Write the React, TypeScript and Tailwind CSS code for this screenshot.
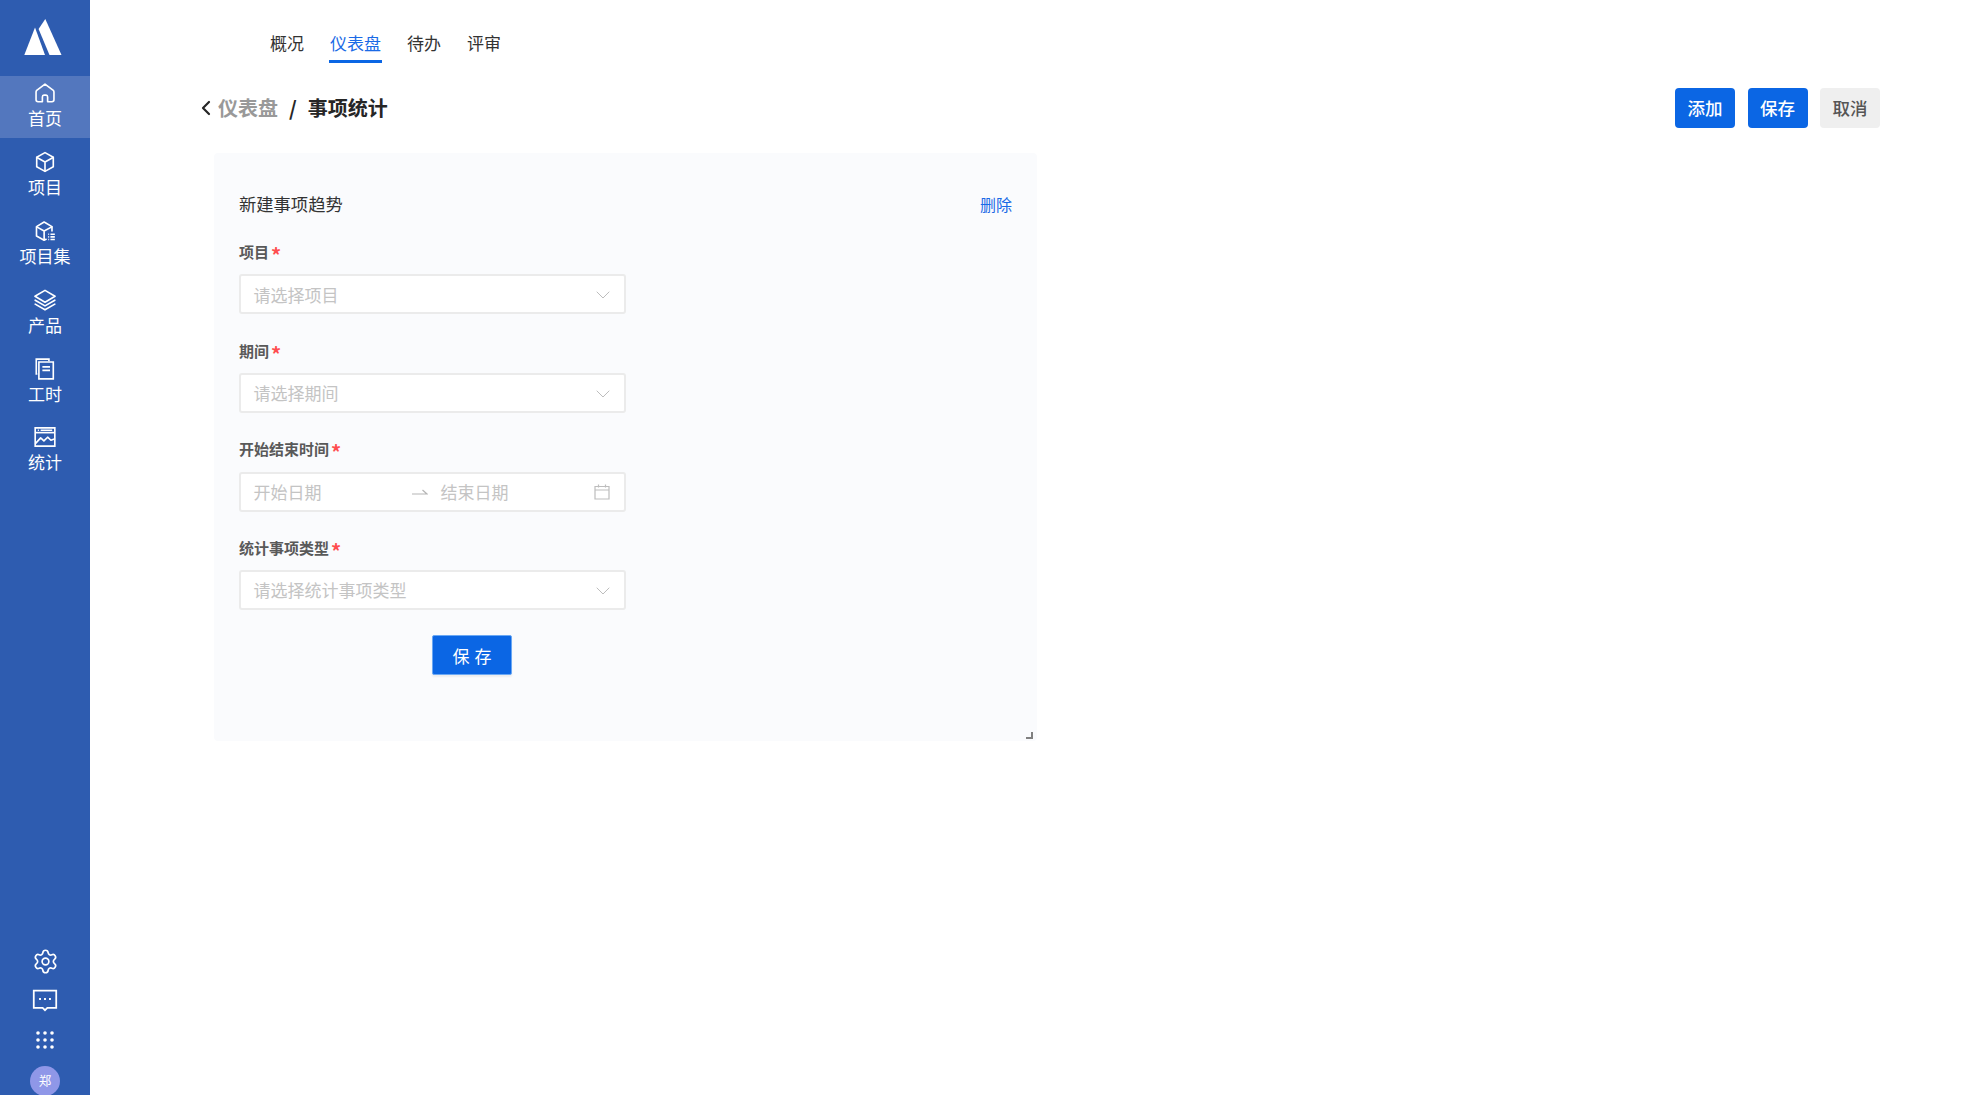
import { ChevronDown, ChevronLeft, Settings } from 'lucide-react';
import type { ReactNode } from 'react';

function Icon({ children, className = 'w-[24px] h-[24px]' }: { children: ReactNode; className?: string }) {
  return (
    <svg viewBox="0 0 22 22" fill="none" stroke="currentColor" strokeWidth="1.5" strokeLinejoin="round" strokeLinecap="round" className={className}>
      {children}
    </svg>
  );
}

const navItems: { label: string; icon: ReactNode; active?: boolean }[] = [
  {
    label: '首页',
    active: true,
    icon: (
      <Icon>
        <path d="M11 2.8 L3.4 8.6 C3 9 2.8 9.4 2.8 10 V17.2 C2.8 18.3 3.6 19 4.6 19 H8.6 V14.6 C8.6 13.6 9.3 13 10 13 H12 C12.8 13 13.4 13.6 13.4 14.6 V19 H17.4 C18.4 19 19.2 18.3 19.2 17.2 V10 C19.2 9.4 19 9 18.6 8.6 Z" />
      </Icon>
    ),
  },
  {
    label: '项目',
    icon: (
      <Icon>
        <path d="M11 2.4 L18.6 6.6 V15.4 L11 19.6 L3.4 15.4 V6.6 Z" />
        <path d="M3.6 6.8 L11 11 L18.4 6.8 M11 11 V19.4" />
      </Icon>
    ),
  },
  {
    label: '项目集',
    icon: (
      <Icon>
        <path d="M12 18.6 L10.2 19.4 L3.2 15.6 V7 L10.2 2.8 L17.4 7 V11" />
        <path d="M3.4 7.2 L10.2 11 L17.2 7.2 M10.2 11 V19" />
        <path d="M14 14 H14.8 M16 14 H20 M14 16.4 H14.8 M16 16.4 H20 M14 18.8 H14.8 M16 18.8 H20" strokeLinecap="butt" />
      </Icon>
    ),
  },
  {
    label: '产品',
    icon: (
      <Icon>
        <path d="M11 2.2 L20.2 7.6 L11 13 L1.8 7.6 Z" />
        <path d="M2 11.2 L11 16.4 L20 11.2" />
        <path d="M2 14.8 L11 20 L20 14.8" />
      </Icon>
    ),
  },
  {
    label: '工时',
    icon: (
      <Icon>
        <path d="M4 15.6 H3 V2 H14.6 V4" strokeLinecap="butt" strokeLinejoin="miter" />
        <path d="M5.4 4.6 H18.6 V20 H5.4 Z" strokeLinejoin="miter" />
        <path d="M8.6 9 H15.6 M8.6 12.2 H15.6" strokeLinecap="butt" />
      </Icon>
    ),
  },
  {
    label: '统计',
    icon: (
      <Icon>
        <path d="M2 2.6 H20 V19.4 H2 Z" strokeLinejoin="miter" />
        <path d="M2 7 H20" strokeLinecap="butt" />
        <path d="M4.4 4.8 H5.4 M7 4.8 H17.6" strokeLinecap="butt" />
        <path d="M2.4 16.8 L7 11.8 L10 14.6 L13.4 11.2 L16.4 14 L19.6 12.8" />
      </Icon>
    ),
  },
];

function Sidebar() {
  return (
    <aside className="w-[90px] h-[1095px] shrink-0 bg-[#2e5cb0] text-white flex flex-col items-center overflow-hidden">
      <svg viewBox="0 0 90 76" className="w-[90px] h-[76px] shrink-0" fill="#ffffff">
        <polygon points="35,27.5 45,55 24.3,55" />
        <polygon points="45.3,19 61.5,55 49.5,55 38.6,29" />
      </svg>
      <nav className="w-full flex flex-col gap-[6.9px]">
        {navItems.map((item) => (
          <a
            key={item.label}
            className={`w-full h-[62px] flex flex-col items-center pt-[5px] text-[17px] leading-[25px] ${item.active ? 'bg-[#5377be]' : ''}`}
          >
            {item.icon}
            <span>{item.label}</span>
          </a>
        ))}
      </nav>
      <div className="mt-auto mb-[-1px] flex flex-col items-center">
        <Settings size={27} strokeWidth={1.5} />
        <Icon className="w-[26px] h-[26px] mt-[12.5px]">
          <path d="M1.5 3 H20.5 V17.6 H13 L11 19.6 L9 17.6 H1.5 Z" strokeLinejoin="miter" />
          <path d="M6 10.2 H7.6 M10.2 10.2 H11.8 M14.4 10.2 H16" strokeLinecap="butt" strokeWidth="1.6" />
        </Icon>
        <svg viewBox="0 0 18 18" className="w-[18px] h-[18px] mt-[18px]" fill="#ffffff">
          {[2, 9, 16].map((y) => [2, 9, 16].map((x) => <circle key={`${x}-${y}`} cx={x} cy={y} r="1.8" />))}
        </svg>
        <div className="w-[30px] h-[30px] mt-[17px] rounded-full bg-[#8f97e8] flex items-center justify-center text-[12.5px] leading-none">郑</div>
      </div>
    </aside>
  );
}

function Label({ text }: { text: string }) {
  return (
    <div className="h-[22px] mb-[11.4px] flex items-center text-[15px] leading-[22px] font-bold text-[#595959]">
      {text}
      <span className="ml-[2px] text-[#ff4d4f] text-[20px] font-bold leading-[22px] relative top-[3px]">*</span>
    </div>
  );
}

function SelectField({ label, placeholder }: { label: string; placeholder: string }) {
  return (
    <div className="mb-[25.2px]">
      <Label text={label} />
      <div className="w-[387px] h-[40px] bg-white border-2 border-[#ebebeb] rounded-[3px] flex items-center justify-between pl-[12.5px] pr-[9px] text-[17px] text-[#c4c4c4]">
        <span>{placeholder}</span>
        <ChevronDown size={24} strokeWidth={1} className="text-[#bdbdbd] relative top-[1px]" />
      </div>
    </div>
  );
}

export default function App() {
  return (
    <div className="w-[1979px] h-[1095px] flex bg-white text-[#333] overflow-hidden font-['Noto_Sans_CJK_SC','Noto_Sans',sans-serif]">
      <Sidebar />
      <main className="flex-1">
        <div className="pl-[179px] flex gap-[24px] text-[17px] leading-[24px]">
          <a className="px-[1px] pt-[31px] pb-[5px] border-b-[3px] border-transparent">概况</a>
          <a className="px-[1px] pt-[31px] pb-[5px] border-b-[3px] border-[#0b66e4] text-[#1a6ae6]">仪表盘</a>
          <a className="px-[1px] pt-[31px] pb-[5px] border-b-[3px] border-transparent">待办</a>
          <a className="px-[1px] pt-[31px] pb-[5px] border-b-[3px] border-transparent">评审</a>
        </div>

        <div className="mt-[25px] pl-[104px] pr-[99px] h-[40px] flex items-center justify-between">
          <div className="flex items-center text-[20px] font-bold">
            <ChevronLeft size={24} strokeWidth={2.2} className="text-[#262626]" />
            <span className="text-[#999]">仪表盘</span>
            <span className="mx-[11px] text-[#262626]">/</span>
            <span className="text-[#262626]">事项统计</span>
          </div>
          <div className="flex gap-[12.5px] text-[17.5px] font-medium">
            <button className="w-[60px] h-[40px] rounded-[4px] bg-[#0b66e4] text-white">添加</button>
            <button className="w-[60px] h-[40px] rounded-[4px] bg-[#0b66e4] text-white">保存</button>
            <button className="w-[60px] h-[40px] rounded-[4px] bg-[#efefef] text-[#555]">取消</button>
          </div>
        </div>

        <section className="relative mt-[25px] ml-[124px] w-[823px] h-[588px] rounded-[4px] bg-[#fafbfd] pl-[25px] pt-[39px]">
          <div className="flex items-center justify-between pr-[25px] mb-[25px] h-[24px]">
            <span className="text-[17.3px] text-[#333]">新建事项趋势</span>
            <span className="text-[16px] text-[#1a6ae6]">删除</span>
          </div>

          <SelectField label="项目" placeholder="请选择项目" />
          <SelectField label="期间" placeholder="请选择期间" />

          <div className="mb-[25.2px]">
            <Label text="开始结束时间" />
            <div className="w-[387px] h-[40px] bg-white border-2 border-[#ebebeb] rounded-[3px] flex items-center pl-[12.5px] text-[17px] text-[#c4c4c4]">
              <span className="w-[158px]">开始日期</span>
              <svg viewBox="0 0 16 8" className="w-[16px] h-[8px] text-[#b5b5b5]" fill="none" stroke="currentColor" strokeWidth="1.2">
                <path d="M0 6 H15 L10.5 2" />
              </svg>
              <span className="ml-[13px]">结束日期</span>
              <svg viewBox="0 0 16 16" className="w-[16px] h-[16px] ml-[85px] text-[#bdbdbd]" fill="none" stroke="currentColor" strokeWidth="1.2">
                <path d="M1 2.5 H15 V15 H1 Z M1 6 H15 M4.5 0.5 V3.5 M11.5 0.5 V3.5" />
              </svg>
            </div>
          </div>

          <SelectField label="统计事项类型" placeholder="请选择统计事项类型" />

          <button className="block ml-[193px] mt-[0.5px] w-[80px] h-[40px] rounded-[2px] bg-[#0b66e4] border border-[#6aa8f4] text-white text-[17px] tracking-[0.3em] indent-[0.3em] shadow-[0_2px_2px_rgba(0,0,0,0.06)]">
            保存
          </button>

          <span className="absolute right-[4px] bottom-[2px] w-[7px] h-[7px] border-r-2 border-b-2 border-[#808080]" />
        </section>
      </main>
    </div>
  );
}
